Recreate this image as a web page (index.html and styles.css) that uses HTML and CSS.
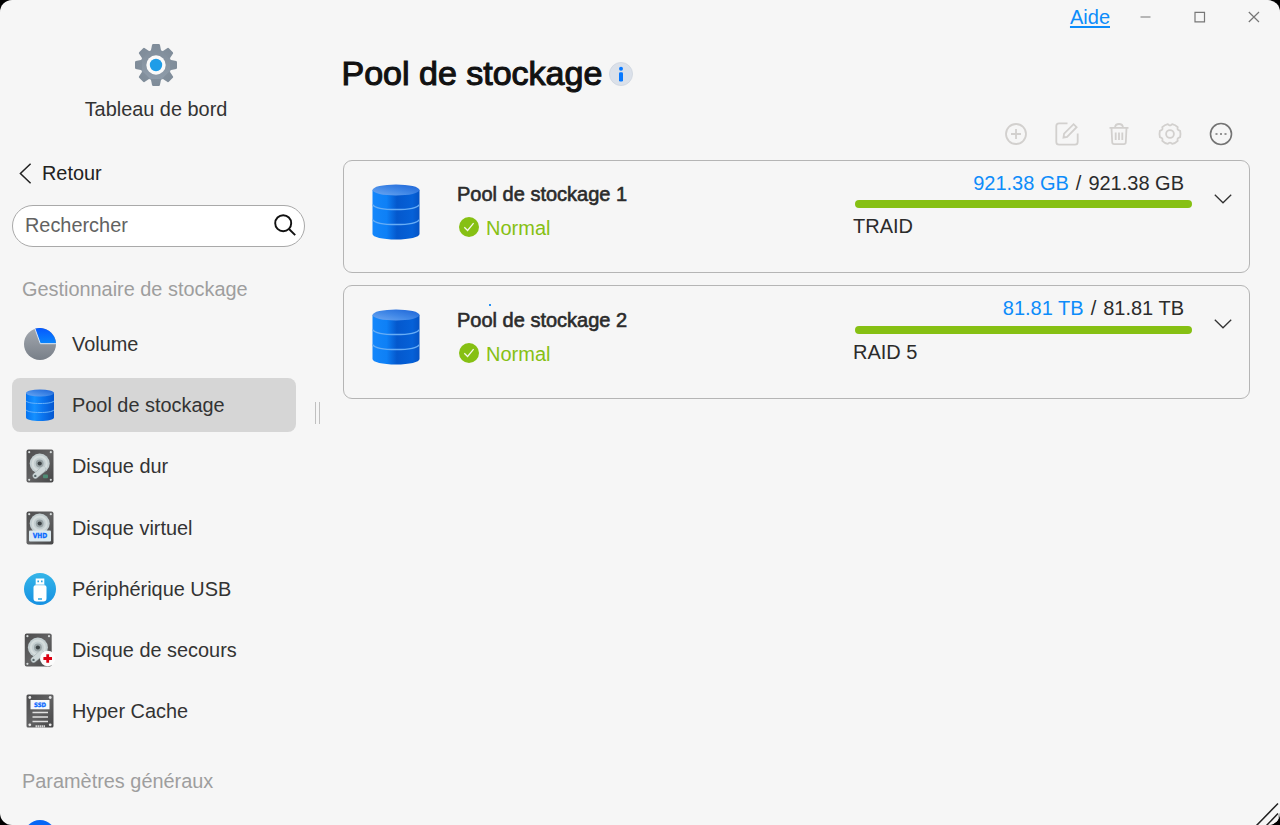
FILE: index.html
```html
<!DOCTYPE html>
<html lang="fr">
<head>
<meta charset="utf-8">
<title>Pool de stockage</title>
<link rel="stylesheet" href="styles.css">
</head>
<body>
<svg class="defs" width="0" height="0" aria-hidden="true">
  <defs>
    <linearGradient id="cyl" x1="0" x2="1" y1="0" y2="0"><stop offset="0" stop-color="#1487fb"/><stop offset=".3" stop-color="#0e80f6"/><stop offset=".52" stop-color="#0458cd"/><stop offset=".85" stop-color="#0561d8"/><stop offset="1" stop-color="#0553c4"/></linearGradient>
    <linearGradient id="cylS" x1="0" x2="1" y1="0" y2="0"><stop offset="0" stop-color="#0573f0"/><stop offset=".3" stop-color="#1590ff"/><stop offset=".6" stop-color="#0a74ee"/><stop offset="1" stop-color="#0557d0"/></linearGradient>
    <linearGradient id="cap" x1="0" x2="1" y1="1" y2="0"><stop offset="0" stop-color="#6fa9f2"/><stop offset=".5" stop-color="#3f86e6"/><stop offset="1" stop-color="#1c63d6"/></linearGradient>
    <linearGradient id="pieG" x1="0" x2="0" y1="0" y2="1"><stop offset="0" stop-color="#a4a9b0"/><stop offset="1" stop-color="#787f88"/></linearGradient>
    <linearGradient id="pieB" x1="0" x2="0" y1="0" y2="1"><stop offset="0" stop-color="#0558ff"/><stop offset="1" stop-color="#0a86fb"/></linearGradient>
    <linearGradient id="usb" x1="0" x2="0" y1="0" y2="1"><stop offset="0" stop-color="#35b5e8"/><stop offset="1" stop-color="#1590e2"/></linearGradient>
    <linearGradient id="dark" x1="0" x2="1" y1="0" y2="1"><stop offset="0" stop-color="#4c4c4d"/><stop offset=".5" stop-color="#626263"/><stop offset="1" stop-color="#464647"/></linearGradient>
    <linearGradient id="gearG" gradientUnits="userSpaceOnUse" x1="0" x2="0" y1="-21" y2="21"><stop offset="0" stop-color="#7f8c99"/><stop offset="1" stop-color="#929fad"/></linearGradient>
    <symbol id="db" viewBox="0 0 48 56">
      <path d="M.5 6v44c0 3 10 5.500 23.500 5.500S47.500 53 47.500 50V6z" fill="url(#cyl)"/>
      <path d="M.5 20.500c2 3.200 11 5 23.500 5s21.500-1.800 23.500-5M.5 35.500c2 3.200 11 5 23.500 5s21.500-1.800 23.500-5" fill="none" stroke="#67adf5" stroke-width="1.300"/>
      <ellipse cx="24" cy="6" rx="23.500" ry="5.500" fill="url(#cap)"/>
    </symbol>
    <symbol id="drive" viewBox="0 0 28 34">
      <rect x=".5" y=".5" width="27" height="33" rx="2" fill="url(#dark)"/>
      <g fill="#d7dcdc"><circle cx="3.200" cy="3.200" r="1.100"/><circle cx="24.800" cy="3.200" r="1.100"/><circle cx="3.200" cy="30.800" r="1.100"/><circle cx="24.800" cy="30.800" r="1.100"/></g>
      <circle cx="13.700" cy="14.500" r="10" fill="#c3ced0"/>
      <circle cx="13.700" cy="14.500" r="7" fill="none" stroke="#d5dddd" stroke-width="2"/>
      <circle cx="13.700" cy="14.500" r="3.900" fill="#98a3a5"/><circle cx="13.700" cy="14.500" r="2.100" fill="#3c4345"/>
      <path d="M17 20.500 9.500 26.800" stroke="#9aa5a7" stroke-width="6" stroke-linecap="round"/>
      <path d="M17.300 20 9.500 26.600" stroke="#ced8d9" stroke-width="5" stroke-linecap="round"/>
      <circle cx="9.300" cy="26.900" r="1.200" fill="#59686b"/>
    </symbol>
    <symbol id="ok" viewBox="0 0 20 20"><circle cx="10" cy="10" r="10" fill="#86c013"/><path d="m5.300 10.200 3.300 3.300 6-7.400" fill="none" stroke="#f4f8ea" stroke-width="1.300"/></symbol>
    <symbol id="down" viewBox="0 0 18 10"><path d="m.8.800 8.200 8 8.200-8" fill="none" stroke="#333" stroke-width="1.300"/></symbol>
  </defs>
</svg>
<div class="window">
  <aside class="sidebar">
    <div class="dashboard">
      <svg class="gear" viewBox="-21 -21 42 42">
        <g fill="url(#gearG)"><circle r="15.500"/>
          <path id="tooth" d="M-5.200-14-3.900-20.200q.2-.8 1.100-.8h5.600q.900 0 1.100.8L5.200-14z"/>
          <use href="#tooth" transform="rotate(45)"/><use href="#tooth" transform="rotate(90)"/><use href="#tooth" transform="rotate(135)"/><use href="#tooth" transform="rotate(180)"/><use href="#tooth" transform="rotate(225)"/><use href="#tooth" transform="rotate(270)"/><use href="#tooth" transform="rotate(315)"/>
        </g>
        <circle r="9.700" fill="#fafafa"/><circle r="6.200" fill="#1e9de8"/>
      </svg>
      <span>Tableau de bord</span>
    </div>
    <div class="back">
      <svg width="13" height="21" viewBox="0 0 13 21"><path d="M11.600.700 1.400 10.500l10.200 9.800" fill="none" stroke="#222" stroke-width="1.500"/></svg>
      <span>Retour</span>
    </div>
    <div class="search">
      <span>Rechercher</span>
      <svg width="22" height="22" viewBox="0 0 22 22" fill="none" stroke="#111" stroke-width="1.900"><circle cx="9.200" cy="9.200" r="8"/><path d="m15 15 6.200 6.200"/></svg>
    </div>
    <h2 class="group">Gestionnaire de stockage</h2>
    <nav class="nav">
      <div class="item"><span class="pic"><svg width="32" height="32" viewBox="0 0 32 32"><circle cx="16" cy="16" r="16" fill="url(#pieG)"/><path d="M16 15.500 11 .8A16 16 0 0 1 32 15.500z" fill="url(#pieB)"/><path d="M11 .8l5.300 14.900H32" fill="none" stroke="#dfe8f2" stroke-width="1"/></svg></span><span>Volume</span></div>
      <div class="item active"><span class="pic"><svg width="28" height="32" viewBox="0 0 28 32"><path d="M0 4v24.500C0 30.500 6 32 14 32s14-1.500 14-3.500V4z" fill="url(#cylS)"/><path d="M0 12c2 1.800 7 2.500 14 2.500S26 13.800 28 12M0 21c2 1.800 7 2.500 14 2.500s12-.700 14-2.500" fill="none" stroke="#67b1fa"/><ellipse cx="14" cy="4" rx="14" ry="3.500" fill="url(#cap)"/></svg></span><span>Pool de stockage</span></div>
      <div class="item"><span class="pic"><svg width="28" height="34" viewBox="0 0 28 34"><use href="#drive"/><rect x="17" y="25.500" width="5" height="3.800" rx="1" fill="#4f8d76"/></svg></span><span>Disque dur</span></div>
      <div class="item"><span class="pic"><svg width="28" height="34" viewBox="0 0 28 34"><rect x=".5" y=".5" width="27" height="33" rx="2" fill="url(#dark)"/><g fill="#d7dcdc"><circle cx="3.200" cy="3.200" r="1.100"/><circle cx="24.800" cy="3.200" r="1.100"/></g><circle cx="13.700" cy="12.500" r="10" fill="#c3ced0"/><circle cx="13.700" cy="12.500" r="7" fill="none" stroke="#d5dddd" stroke-width="2"/><circle cx="13.700" cy="12.500" r="3.900" fill="#98a3a5"/><circle cx="13.700" cy="12.500" r="2.100" fill="#3c4345"/><rect x="3" y="19.500" width="22" height="11" rx="1" fill="#dce9ef"/><text class="tag" x="14" y="27.400" text-anchor="middle" textLength="14.500" lengthAdjust="spacingAndGlyphs">VHD</text></svg></span><span>Disque virtuel</span></div>
      <div class="item"><span class="pic"><svg width="32" height="32" viewBox="0 0 32 32"><circle cx="16" cy="16" r="16" fill="url(#usb)"/><path d="M11.700 5.500h8.600v7h-8.600z" fill="#fff"/><path d="M11.500 12.200h9q2 0 2 2v11q0 3.200-3.200 3.200h-6.600q-3.200 0-3.200-3.200v-11q0-2 2-2z" fill="#fff"/><path d="M11.700 11.700h8.600" stroke="#8fd2f2" stroke-width=".8"/><path d="M13.400 7.500h1.600v1.700h-1.600zM17 7.500h1.600v1.700H17zM14 25.200h4v1.500h-4z" fill="#2ba6e4"/></svg></span><span>Périphérique USB</span></div>
      <div class="item"><span class="pic"><svg width="32" height="34" viewBox="0 0 32 34"><use href="#drive" x=".2" width="28" height="34"/><circle cx="23.700" cy="25.500" r="7.700" fill="#fcfcfc"/><path d="M23.700 21.200v8.600M19.400 25.500H28" stroke="#dc0012" stroke-width="2.800"/></svg></span><span>Disque de secours</span></div>
      <div class="item"><span class="pic"><svg width="28" height="34" viewBox="0 0 28 34"><rect x=".5" y=".5" width="27" height="33" rx="1.500" fill="url(#dark)"/><g fill="#e6e6e6"><circle cx="3.800" cy="3.500" r="1.400"/><circle cx="24.200" cy="3.500" r="1.400"/><circle cx="3.800" cy="30.800" r="1.400"/><circle cx="24.200" cy="30.800" r="1.400"/></g><rect x="4.500" y="6" width="19" height="9.300" fill="#f6f8fa"/><text class="tag ssd" x="14" y="13" text-anchor="middle" textLength="12" lengthAdjust="spacingAndGlyphs">SSD</text><path d="M6.500 18.500h15.500M6.500 23h15.500M6.500 27.500h15.500" stroke="#e1e1e1" stroke-width="1.600"/><path d="M9.500 32.300h9.500" stroke="#d5d5d5" stroke-width="2.200" stroke-dasharray="1.600 .5"/></svg></span><span>Hyper Cache</span></div>
    </nav>
    <h2 class="group general">Paramètres généraux</h2>
    <div class="item next"><span class="pic"><svg width="32" height="32" viewBox="0 0 32 32"><circle cx="16" cy="16" r="16" fill="#0867f6"/></svg></span></div>
  </aside>
  <div class="splitter"><div class="grip"></div></div>
  <main class="main">
    <header class="titlebar">
      <a class="help">Aide</a>
      <svg class="control" viewBox="0 0 12 12"><path d="M.5 6h10"/></svg>
      <svg class="control" viewBox="0 0 12 12"><path d="M1 1.300h9.500v9.500H1z"/></svg>
      <svg class="control" viewBox="0 0 12 12"><path d="m.8 1 10.200 10M11 1 .8 11"/></svg>
    </header>
    <div class="heading">
      <h1>Pool de stockage</h1>
      <svg width="24" height="24" viewBox="0 0 24 24"><circle cx="12" cy="12" r="11.500" fill="#dbe1ea" stroke="#d3d9e2"/><circle cx="12" cy="6.800" r="2" fill="#0879ff"/><rect x="10" y="10.200" width="4" height="9.200" rx="1.200" fill="#0879ff"/></svg>
    </div>
    <div class="toolbar">
      <svg class="tool" viewBox="0 0 24 24"><circle cx="12" cy="12" r="10"/><path d="M12 7v10M7 12h10"/></svg>
      <svg class="tool" viewBox="0 0 24 24"><path d="M12.500 1.300H4Q1.300 1.300 1.300 4v16q0 2.700 2.700 2.700h16q2.700 0 2.700-2.700v-8.500"/><path d="m8.500 15.500.6-3.900L18.600 2.200l3 3-9.500 9.600z"/></svg>
      <svg class="tool" viewBox="0 0 24 24"><path d="M2.500 5.800h19M8 5.500Q8.300 2 12 2t4 3.500M4.500 6l.7 14.300q.1 1.900 2 1.900h9.600q1.900 0 2-1.900L19.500 6M8.700 10.500v7.500M12 10.500v7.500M15.300 10.500v7.500"/></svg>
      <svg class="tool" viewBox="-12 -12 24 24"><path d="M10.100-3.200Q10.900 0 10.100 3.200L8.600 3.800Q7.300 4.300 7.500 5.600L7.700 6.800Q5.400 9.200 2.200 9.900L1.100 9Q0 8.200-1.100 9L-2.200 9.900Q-5.400 9.200-7.700 6.800L-7.500 5.600Q-7.300 4.300-8.600 3.800L-10.100 3.200Q-10.900 0-10.100-3.200L-8.600-3.800Q-7.300-4.300-7.500-5.600L-7.700-6.800Q-5.400-9.200-2.200-9.900L-1.100-9Q0-8.200 1.100-9L2.200-9.900Q5.400-9.200 7.700-6.800L7.500-5.600Q7.300-4.300 8.600-3.800z"/><circle r="3.900"/></svg>
      <svg class="tool more" viewBox="0 0 24 24"><circle cx="12" cy="12" r="10.500"/><path d="M6.500 12h2M11 12h2M15.500 12h2"/></svg>
    </div>
    <section class="pools">
      <article class="pool">
        <svg class="db"><use href="#db"/></svg>
        <div class="info"><h3>Pool de stockage 1</h3><div class="status"><svg><use href="#ok"/></svg><span>Normal</span></div></div>
        <div class="usage"><div class="size"><span class="used">921.38 GB</span><span>/</span><span>921.38 GB</span></div><div class="bar"></div><div class="type">TRAID</div></div>
        <svg class="chevron"><use href="#down"/></svg>
      </article>
      <article class="pool second">
        <svg class="db"><use href="#db"/></svg>
        <div class="info"><h3>Pool de stockage 2</h3><div class="status"><svg><use href="#ok"/></svg><span>Normal</span></div></div>
        <div class="usage"><div class="size"><span class="used">81.81 TB</span><span>/</span><span>81.81 TB</span></div><div class="bar"></div><div class="type">RAID 5</div></div>
        <svg class="chevron"><use href="#down"/></svg>
        <i class="dot"></i>
      </article>
    </section>
  </main>
  <svg class="resize" viewBox="0 0 26 24"><path d="M26 12v12H14z" fill="#b8b8b8"/><path d="M24 13v11H13z" fill="#f6f6f6"/><path d="M2.500 24.500 24 2.500M12.500 24.500 24 12.500" stroke="#222" stroke-width="1.500"/></svg>
</div>
</body>
</html>
```

FILE: styles.css
```css
* { box-sizing: border-box; }
body {
  margin: 0;
  background: #000;
  font: 20px/24px "Liberation Sans", Arial, sans-serif;
  color: #333;
}
svg { display: block; flex: none; }
h1, h2, h3 { margin: 0; font-weight: 400; }
.defs { position: absolute; }

.window {
  position: relative;
  display: flex;
  width: 1280px;
  height: 825px;
  overflow: hidden;
  border-radius: 12px;
  background: #f6f6f6;
}

.sidebar { width: 311px; height: 825px; padding: 44px 0 0 12px; overflow: hidden; flex: none; font-size: 19.9px; }
.dashboard {
  display: flex;
  flex-direction: column;
  align-items: center;
  gap: 11px;
  width: 288px;
}
.gear { width: 42px; height: 42px; }
.back { display: flex; align-items: center; gap: 10px; margin-top: 40px; padding-left: 7px; height: 24px; color: #222; }
.search {
  display: flex;
  align-items: center;
  justify-content: space-between;
  width: 293px;
  height: 42px;
  margin-top: 20px;
  padding: 0 8px 2px 12px;
  border: 1px solid #a9a9a9;
  border-radius: 21px;
  background: #fff;
  color: #626262;
}
.group { margin-top: 30px; padding-left: 10px; font-size: 19.9px; line-height: 24px; color: #9e9e9e; }
.nav { display: flex; flex-direction: column; gap: 7.200px; margin-top: 16px; }
.item { display: flex; align-items: center; gap: 16px; width: 284px; height: 54px; padding-left: 12px; border-radius: 8px; }
.item.active { background: #d6d6d6; }
.pic { display: flex; justify-content: center; width: 32px; }
.general { margin-top: 31px; }
.next { margin-top: 16px; }
.tag { font: 700 7px "DejaVu Sans", sans-serif; fill: #0868ff; stroke: #0868ff; stroke-width: .3; }
.ssd { font-size: 6px; }

.splitter { display: flex; align-items: center; width: 32px; flex: none; }
.grip { width: 5px; height: 22px; margin-left: 4px; border: 1px solid #c0c0c0; border-width: 0 1px; }

.main { width: 907px; flex: none; }
.titlebar { display: flex; justify-content: flex-end; align-items: center; gap: 42px; height: 34px; margin-right: -10px; }
.help { margin-right: -12px; color: #0d8cfa; text-decoration: underline; text-decoration-thickness: 2px; text-underline-offset: 2px; }
.control { width: 12px; height: 12px; fill: none; stroke: #777; stroke-width: 1.200; }
.heading { display: flex; align-items: center; gap: 7px; height: 44px; margin: 17px 0 0 -1.5px; }
.heading svg { margin-top: 2px; }
.heading h1 { font-size: 34px; line-height: 44px; color: #111; -webkit-text-stroke: 1.1px #111; }

.toolbar { display: flex; justify-content: flex-end; align-items: center; gap: 27.200px; height: 24px; margin-top: 27px; padding-right: 17px; }
.tool { width: 24px; height: 24px; fill: none; stroke: #d2d0ce; stroke-width: 1.800; }
.more { stroke: #747474; stroke-width: 1.600; }

.pools { display: flex; flex-direction: column; gap: 12px; margin-top: 14px; }
.pool {
  position: relative;
  display: flex;
  align-items: flex-start;
  width: 907px;
  height: 113px;
  padding-left: 28px;
  border: 1px solid #b5b5b5;
  border-radius: 9px;
}
.pool.second { height: 114px; }
.db { width: 48px; height: 56px; margin-top: 23px; }
.info { width: 432px; padding: 21px 0 0 37px; flex: none; }
.second .info { padding-top: 22px; }
.info h3 { font-size: 20px; line-height: 24px; color: #2b2b2b; -webkit-text-stroke: .6px #2b2b2b; }
.status { display: flex; align-items: center; gap: 7px; margin-top: 10px; padding-left: 2px; color: #86c013; }
.status svg { width: 20px; height: 20px; margin-top: -3px; }
.usage { width: 340px; padding-top: 10px; color: #2b2b2b; flex: none; }
.size { display: flex; justify-content: flex-end; gap: 7px; padding-right: 8px; }
.used { color: #0d8cfa; }
.bar { width: 337px; height: 8px; margin: 5px 0 0 3px; border-radius: 4px; background: #86c013; }
.second .bar { margin-top: 6px; }
.type { margin-top: 6px; padding-left: 1px; }
.chevron { width: 18px; height: 10px; margin: 33px 0 0 22px; }
.dot { position: absolute; left: 145px; top: 18px; width: 2px; height: 2px; background: #2692f5; }
.resize { position: absolute; right: 0; bottom: 0; width: 26px; height: 24px; }
```
